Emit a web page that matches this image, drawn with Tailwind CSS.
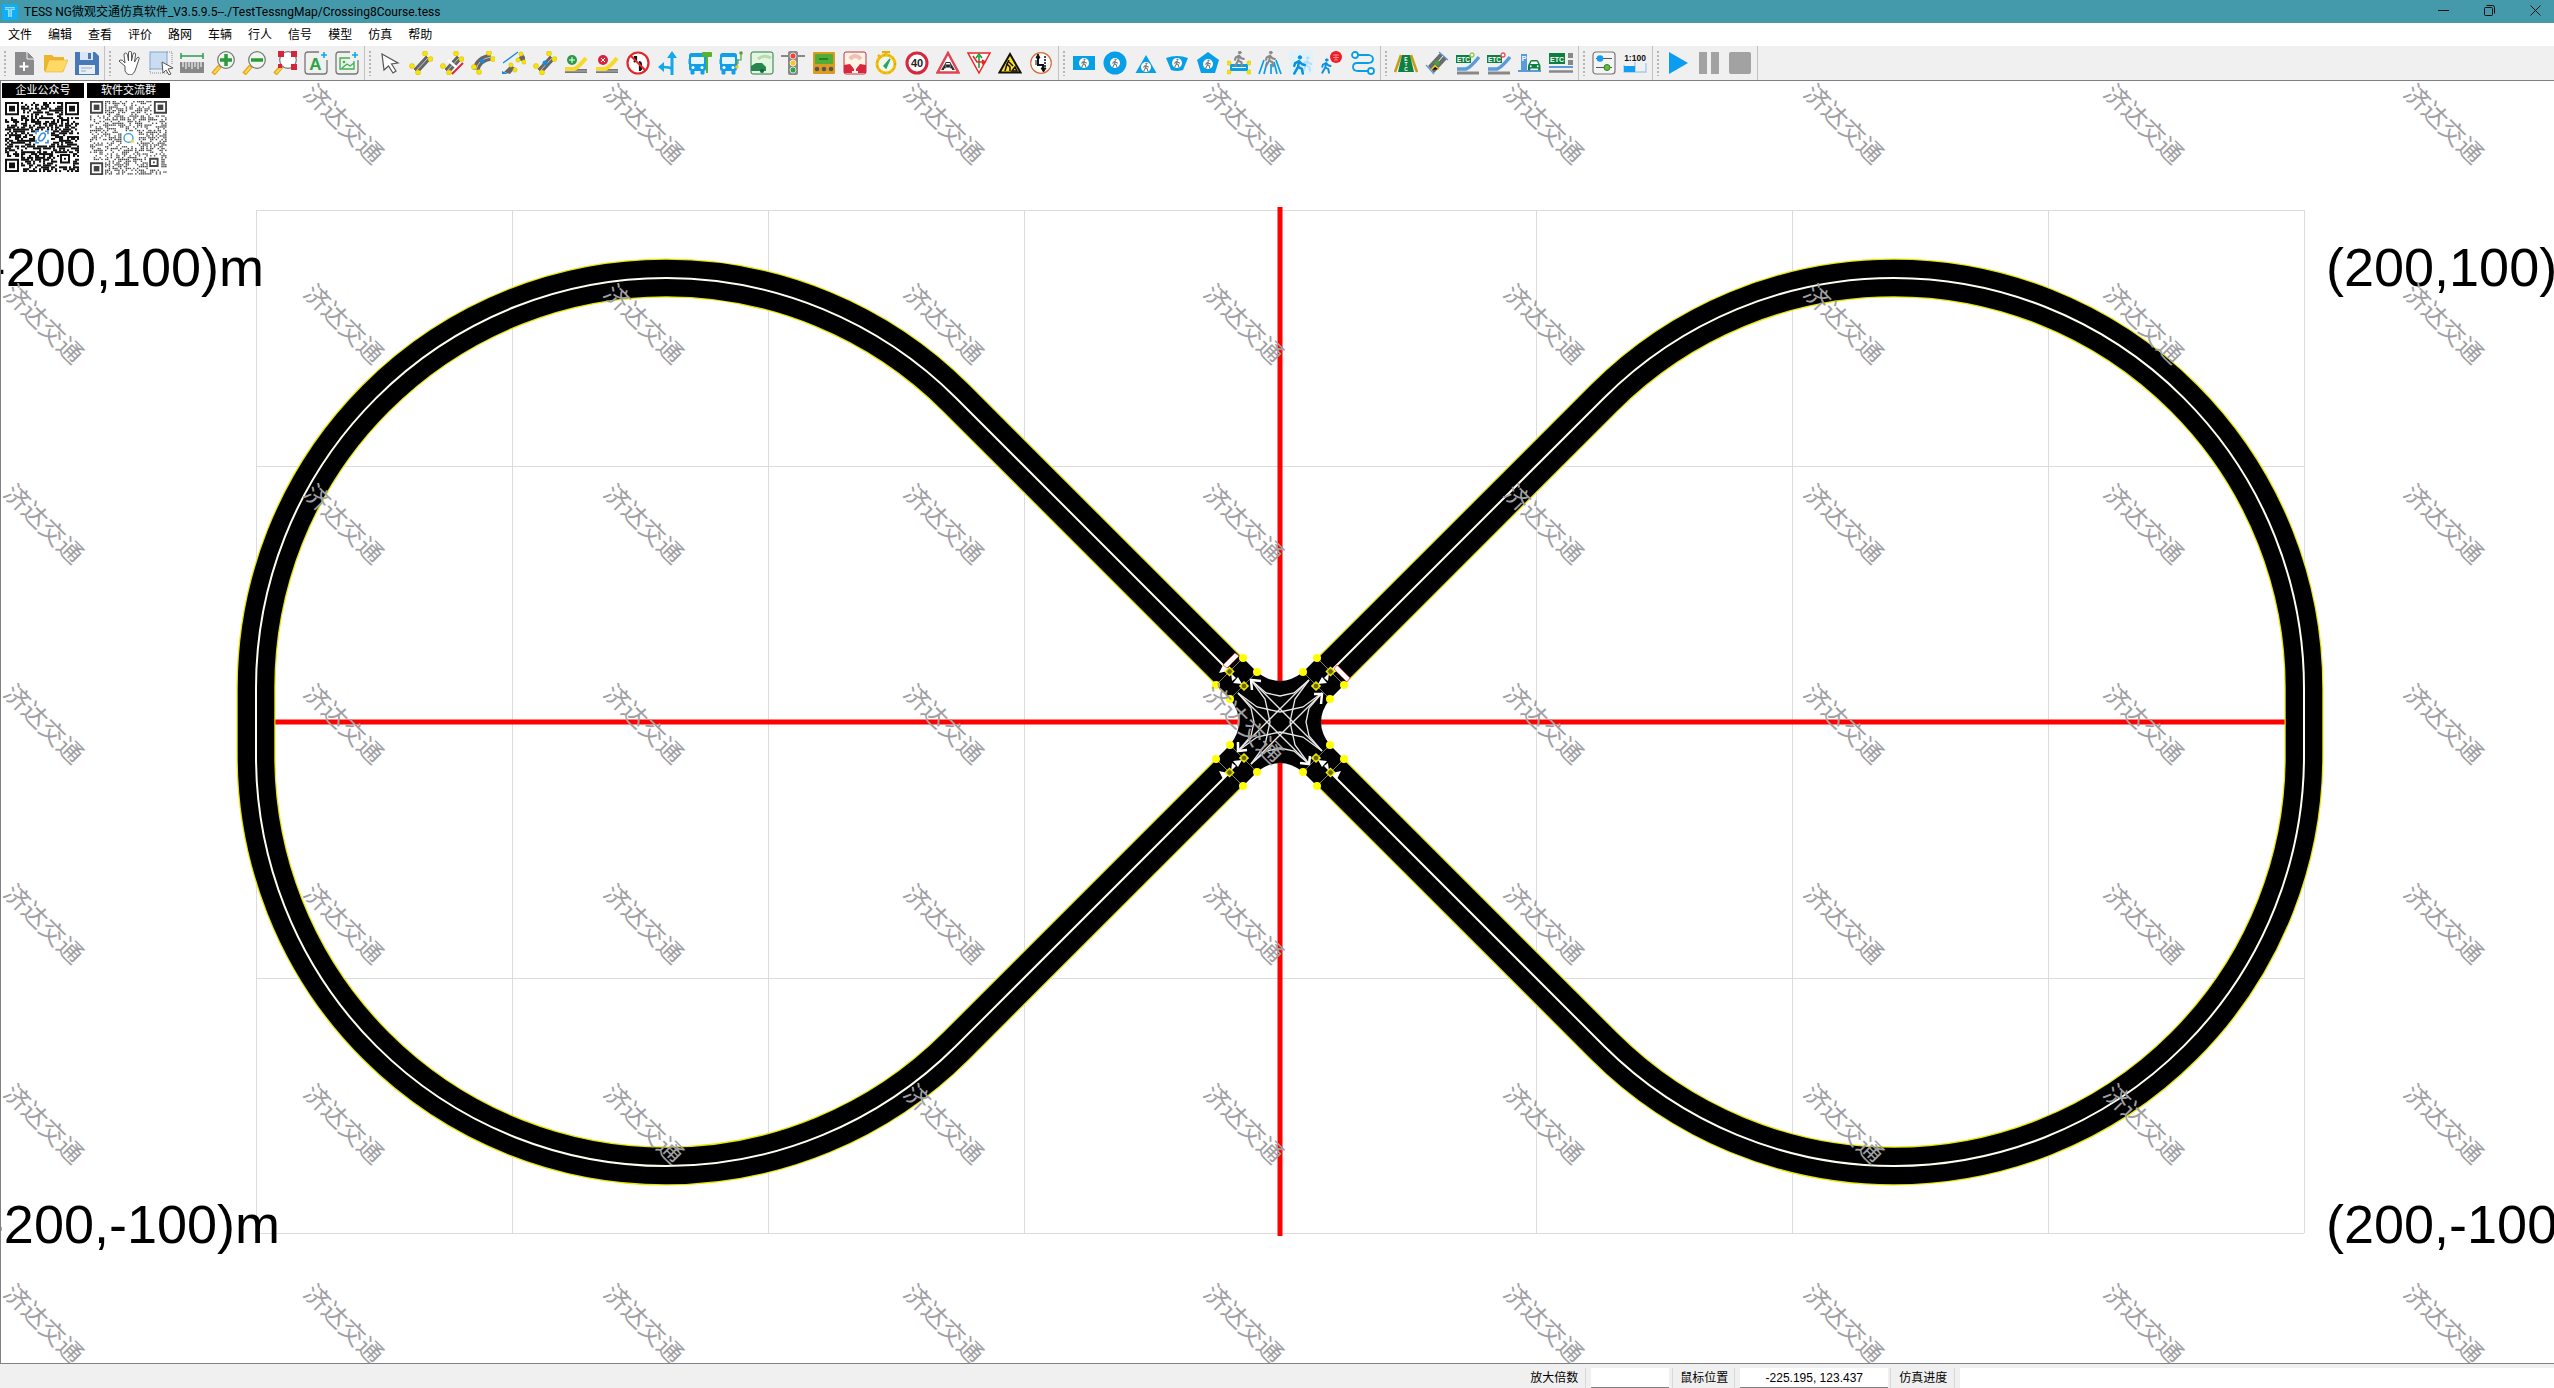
<!DOCTYPE html>
<html lang="zh-CN">
<head>
<meta charset="utf-8">
<title>TESS NG微观交通仿真软件</title>
<script src="https://cdn.jsdelivr.net/npm/@tailwindcss/browser@4"></script>
</head>
<body class="h-screen flex flex-col overflow-hidden bg-white text-black text-[12px] font-['Liberation_Sans','Noto_Sans_CJK_SC',sans-serif]">

<header class="h-[23px] shrink-0 flex items-center bg-[#449aab] pl-[2px]">
  <svg class="w-4 h-4 shrink-0" viewBox="0 0 16 16"><rect width="16" height="16" rx="2" fill="#12aef5"/><path d="M3 3h10v3h-3v7H6V6H3z" fill="#8fdcff"/><path d="M3 4.500h10M8 4v9" stroke="#12aef5" stroke-width=".6"/></svg>
  <h1 class="ml-[6px] text-[12px] leading-4 whitespace-nowrap font-['Roboto','Noto_Sans_CJK_SC',sans-serif]">TESS NG微观交通仿真软件_V3.5.9.5--./TestTessngMap/Crossing8Course.tess</h1>
  <div class="ml-auto -mr-1 flex h-full shrink-0">
    <button aria-label="最小化" class="w-[46px] grid place-items-center"><svg class="w-[11px] h-[11px] -mt-[2px]" viewBox="0 0 11 11" stroke="#111" fill="none"><path d="M0 5.500h11"/></svg></button>
    <button aria-label="还原" class="w-[46px] grid place-items-center"><svg class="w-[11px] h-[11px] -mt-[2px]" viewBox="0 0 11 11" stroke="#111" fill="none"><rect x=".5" y="2.500" width="8" height="8" rx="1"/><path d="M2.500.5h6a2 2 0 0 1 2 2v6"/></svg></button>
    <button aria-label="关闭" class="w-[46px] grid place-items-center"><svg class="w-[11px] h-[11px] -mt-[2px]" viewBox="0 0 11 11" stroke="#111" fill="none"><path d="M.5.5l10 10M10.500.5l-10 10"/></svg></button>
  </div>
</header>

<nav class="h-[23px] shrink-0 flex items-center" aria-label="菜单">
  <button class="px-2">文件</button><button class="px-2">编辑</button><button class="px-2">查看</button><button class="px-2">评价</button><button class="px-2">路网</button><button class="px-2">车辆</button><button class="px-2">行人</button><button class="px-2">信号</button><button class="px-2">模型</button><button class="px-2">仿真</button><button class="px-2">帮助</button>
</nav>

<div id="toolbar" role="toolbar" class="h-[34px] shrink-0 flex bg-[#f0f0f0]"></div>

<main class="relative flex-1 min-h-0 border-t border-b border-l border-[#808085] bg-white overflow-hidden">
  <svg class="block w-full h-full" viewBox="1 81 2553 1282" preserveAspectRatio="xMidYMid slice">
    <defs>
      <path id="loop" d="M1229.500 671.500L956 398A410 410 0 0 0 666 278A410 410 0 0 0 256 688V756A410 410 0 0 0 666 1166A410 410 0 0 0 956 1046L1229.500 772.500"/>
      <g id="side" fill="none" stroke="#e8e8e8" stroke-width="1.300">
        <path d="M-29-42L-14-29L0-26L14-29L29-42"/>
        <path d="M-42-29L-23-15L0-10L23-15L42-29"/>
      </g>
      <g id="leg">
        <path d="M-64-37L-37-64M-50-23L-23-50" stroke="#999" stroke-width=".7"/>
        <path d="M-44-44l-5-5 1 8zM-38-38l-9-1 5-6zM-57-57l-4 8 9-2z" fill="#fff"/>
        <g fill="#ff0"><circle cx="-37" cy="-64" r="4"/><circle cx="-23" cy="-50" r="4"/><circle cx="-64" cy="-37" r="4"/><circle cx="-50" cy="-23" r="4"/></g>
        <g fill="#6b6500" stroke="#ff0" stroke-width="1.200"><rect x="-53.500" y="-53.500" width="6" height="6" transform="rotate(45 -50.500 -50.500)"/><rect x="-39" y="-39" width="6" height="6" transform="rotate(45 -36 -36)"/><circle cx="-50.500" cy="-50.500" r="2.800" stroke-width=".7"/><circle cx="-36" cy="-36" r="2.800" stroke-width=".7"/></g>
      </g>
    </defs>
    <path d="M256.500 210V1233M512.500 210V1233M768.500 210V1233M1024.500 210V1233M1536.500 210V1233M1792.500 210V1233M2048.500 210V1233M2304.500 210V1233M256 210.500H2304M256 466.500H2304M256 978.500H2304M256 1233.500H2304" stroke="#dcdcdc" fill="none"/>
    <path d="M1280 207V1236M256 722H2304" stroke="#f00" stroke-width="5"/>
    <g class="text-[54px] font-['Liberation_Sans',sans-serif]">
      <text x="264" y="286" text-anchor="end">(-200,100)m</text>
      <text x="280" y="1243" text-anchor="end">(-200,-100)m</text>
      <text x="2326" y="286">(200,100)m</text>
      <text x="2326" y="1243">(200,-100)m</text>
    </g>
    <g fill="none">
      <g stroke="#e6e600" stroke-width="39"><use href="#loop"/><use href="#loop" transform="translate(2560) scale(-1 1)"/></g>
      <g stroke="#000" stroke-width="36.500"><use href="#loop"/><use href="#loop" transform="translate(2560) scale(-1 1)"/></g>
      <g stroke="#fffff0" stroke-width="2"><use href="#loop"/><use href="#loop" transform="translate(2560) scale(-1 1)"/></g>
    </g>
    <g transform="translate(1280 722)">
      <path d="M-37-64L-23-50Q0-32 23-50L37-64L64-37L50-23Q32 0 50 23L64 37L37 64L23 50Q0 32-23 50L-37 64L-64 37L-50 23Q-32 0-50-23L-64-37Z"/>
      <use href="#side"/><use href="#side" transform="rotate(90)"/><use href="#side" transform="rotate(180)"/><use href="#side" transform="rotate(270)"/>
      <path d="M-29-42L42 29M-42-29L29 42M29-42L-42 29M42-29L-29 42" stroke="#e8e8e8" stroke-width="1.300"/>
      <path d="M-28-32L-29-42L-19-41M34-28L42-28L41-18M30 34L29 42L20 41M-42 20L-42 29L-33 28" fill="none" stroke="#fff" stroke-width="2.500"/>
      <use href="#leg"/><use href="#leg" transform="scale(-1 1)"/><use href="#leg" transform="scale(1 -1)"/><use href="#leg" transform="scale(-1 -1)"/>
      <path d="M-57-57L-45-69L-41-66L-53-54ZM57-57L70-44L67-40L54-53Z" fill="#fff" stroke="#f33" stroke-width=".7"/>
    </g>
    <g id="marks" fill="#a0a0a4" class="text-[25px] font-['Noto_Sans_CJK_SC',sans-serif]"></g>
  </svg>
  <div class="absolute left-[1px] top-[2px] flex gap-[3px] text-white text-[11px] leading-[15px] text-center">
    <figure class="w-[82px] h-[94px] bg-white"><figcaption class="h-[15px] bg-black">企业公众号</figcaption><svg id="qr1" class="ml-[3px] mt-[4px] w-[74px] h-[70px]" viewBox="0 0 37 37" preserveAspectRatio="none" role="img" aria-label="企业公众号二维码"></svg></figure>
    <figure class="w-[83px] h-[94px] bg-white"><figcaption class="h-[15px] bg-black">软件交流群</figcaption><svg id="qr2" class="ml-[3px] mt-[3px] w-[77px] h-[74px]" viewBox="0 0 41 41" preserveAspectRatio="none" role="img" aria-label="软件交流群二维码"></svg></figure>
  </div>
</main>

<footer class="h-[24px] shrink-0 flex items-stretch bg-[#f0f0f0] pt-[4px] leading-5">
  <div class="grow-[1523] basis-0"></div>
  <label for="zoom" class="w-[64px] pl-2 border-r border-[#d8d8d8]">放大倍数</label>
  <input id="zoom" class="ml-[5px] w-[78px] bg-white border-b border-[#808080] text-center">
  <label for="pos" class="ml-[3px] w-[63px] pl-[7px] border-l border-r border-[#d8d8d8]">鼠标位置</label>
  <input id="pos" value="-225.195, 123.437" class="ml-[5px] w-[148px] bg-white border-b border-[#808080] text-center">
  <label for="prog" class="ml-[2px] w-[65px] pl-2 border-l border-r border-[#d8d8d8]">仿真进度</label>
  <output id="prog" class="ml-[5px] grow-[594] basis-0 bg-white"></output>
</footer>

<script>
const dots = (pts, r = 2.2) => pts.map(p => `<circle cx="${p[0]}" cy="${p[1]}" r="${r}" fill="#f7e307" stroke="#c9b400" stroke-width=".4"/>`).join('');
const road = `<path d="M5 18L17 5L21 9L9 22Z" fill="#666" stroke="#333" stroke-width=".5"/><path d="M7 20L19 7" stroke="#ddd" stroke-width=".8"/>`;
const ends = dots([[3, 15], [16, 2.5], [21.5, 8], [9, 21.5]], 2.6);
const man = (c, x, y, s) => `<g transform="translate(${x} ${y}) scale(${s})" fill="none" stroke="${c}" stroke-width="2.600" stroke-linecap="round" stroke-linejoin="round"><circle cx="1" cy="-8" r="1.800" fill="${c}" stroke-width="1"/><path d="M0-4L-4-2L-5 1M0-4L3-1L6 0M0-4L-1 2L-5 9M-1 2L3 4L4 9" /></g>`;
const lens = `<path d="M9 15L2 23" stroke="#e0a81f" stroke-width="4.500"/><path d="M8.500 16L3 22" stroke="#ffd54c" stroke-width="2"/>`;
const bus = `<rect x="1" y="2" width="17" height="18" rx="2.500" fill="#129ee8"/><rect x="3" y="6" width="13" height="7" rx="1" fill="#e5f6ff"/><circle cx="5" cy="16.500" r="1.500" fill="#fff"/><circle cx="14" cy="16.500" r="1.500" fill="#fff"/><path d="M3 20h3v3H3zM13 20h3v3h-3zM0 8v5M19 8v5" fill="#129ee8" stroke="#129ee8"/>`;
const car = (c, x, y, s) => `<g transform="translate(${x} ${y}) scale(${s})"><path d="M1 5L3 1Q3.500 0 5 0H11Q12.500 0 13 1L15 5Q16 6 16 8V13H13V11H3V13H0V8Q0 6 1 5Z" fill="${c}"/><path d="M3 5L4.500 2H11.500L13 5Z" fill="#fff"/><circle cx="3.500" cy="8" r="1.200" fill="#fff"/><circle cx="12.500" cy="8" r="1.200" fill="#fff"/></g>`;
const ped = (x, y) => `<circle cx="${x}" cy="${y}" r="5" fill="#fff"/>` + man('#777', x, y, .42);
const label = (x, y, s, t, c) => `<text x="${x}" y="${y}" font-size="${s}" font-weight="bold" text-anchor="middle" fill="${c}">${t}</text>`;
const merge = `<path d="M1 20H23" stroke="#777" stroke-width="4"/><path d="M1 18H10Q14 17 22 7" stroke="#f8d928" stroke-width="4" fill="none"/><path d="M1 20H23" stroke="#ddd" stroke-width=".6"/>`;
const etcRamp = c => `<path d="M1 22H23" stroke="#888" stroke-width="3"/><path d="M1 18H10Q14 17 23 6" stroke="#5a9bdc" stroke-width="3.500" fill="none"/><rect x="0" y="4" width="15" height="8" fill="#0c8040"/>${label(7.5, 10.500, 6.500, 'ETC', '#fff')}<circle cx="16" cy="4" r="2" fill="#fff" stroke="${c}" stroke-width="1.300"/>`;

const groups = [
 [['新建','<path d="M2 1H13L21 9V24H2Z" fill="#8a8a8c"/><path d="M14 0L22 8H14Z" fill="#8a8a8c" stroke="#f0f0f0"/><path d="M11 11V20M6.500 15.500H15.500" stroke="#fff" stroke-width="2"/>'],
  ['打开','<path d="M0 4H8L10 6H20V20H0Z" fill="#edb52c"/><path d="M5 9H24L19 21H1Z" fill="#ffd965" stroke="#e0a81f" stroke-width=".5"/>'],
  ['保存','<path d="M0 1H20L24 5V24H0Z" fill="#4679b5"/><path d="M5 1H18V9H5Z" fill="#dce6f2"/><path d="M13 2H16V8H13Z" fill="#4679b5"/><path d="M4 14H20V23H4Z" fill="#e8eef6"/><path d="M6 17H17M6 20H11" stroke="#9ab"/>']],
 [['平移','<path d="M7 15L2 11Q0 10 2 9Q4 8 7 12L6 4Q6 2 7.500 2Q9 2 9.500 4L10.500 10V2Q10.500 0 12 0Q13.500 0 13.500 2V10L15 3Q15.500 1.500 17 2Q18 2.500 17.500 4L16.500 11L19 7Q20 5.500 21 6.500Q21.500 7 21 8L18 17Q16 24 12 24Q9 24 7 20Z" fill="#fff" stroke="#444" stroke-width=".9"/>'],
  ['框选','<rect x="1" y="1" width="17" height="17" fill="#c9dcf0" stroke="#7ea6d2"/><path d="M1 18V22H18M18 1H23V14" fill="none" stroke="#888" stroke-dasharray="1 1"/><path d="M13 11L24 17L19 18L22 23L20 24L17 19L14 22Z" fill="#fff" stroke="#555"/>'],
  ['测距','<path d="M1 2V8M23 2V8M1 5H23" stroke="#2a9a55" stroke-width="1.500"/><rect x="0" y="11" width="24" height="11" fill="#888"/><path d="M3 11V16M6 11V18M9 11V16M12 11V18M15 11V16M18 11V18M21 11V16" stroke="#f0f0f0" stroke-width="1.200"/>'],
  ['放大',lens+'<circle cx="15" cy="9" r="8.300" fill="#eef6ee" stroke="#777" stroke-width="1.200"/><path d="M15 3V15M9 9H21" stroke="#2c9a3b" stroke-width="3.500"/>'],
  ['缩小',lens+'<circle cx="15" cy="9" r="8.300" fill="#eef6ee" stroke="#777" stroke-width="1.200"/><path d="M9 9H21" stroke="#2c9a3b" stroke-width="3.500"/>'],
  ['全图',lens+'<circle cx="15" cy="9" r="8.300" fill="#fff" stroke="#777" stroke-width="1.200"/><path d="M5 0h6v6H5zM18 0h6v6h-6zM18 13h6v6h-6zM5 13h4v4H5z" fill="#d8233c"/>'],
  ['添加文字','<path d="M15 1H4Q1 1 1 4V20Q1 23 4 23H20Q23 23 23 20V9" fill="none" stroke="#777" stroke-width="1.300"/>'+label(11.5,18.500,17,'A','#2ba446')+'<path d="M20 1V7M17 4H23" stroke="#12a7ee" stroke-width="1.600"/>'],
  ['添加图片','<path d="M15 1H4Q1 1 1 4V20Q1 23 4 23H20Q23 23 23 20V9" fill="none" stroke="#777" stroke-width="1.300"/><path d="M15 7H5V18H19V10M7 17L12 13L15 15L19 12" fill="none" stroke="#3db34e" stroke-width="1.400"/><circle cx="9" cy="11" r="1.300" fill="#3db34e"/><path d="M20 1V7M17 4H23" stroke="#12a7ee" stroke-width="1.600"/>']],
 [['选择','<path d="M4 3L20 12L13.500 13L18 20L15 22L10.500 15L6 19Z" fill="#fff" stroke="#555" stroke-width="1.200"/>'],
  ['路段',road+ends],
  ['打断路段',road+'<path d="M8 9L17 17" stroke="#fff" stroke-width="2.500"/>'+ends+'<path d="M12 23L23 12" stroke="#d8283c" stroke-width="2"/>'],
  ['曲线路段','<path d="M5 19Q7 8 20 6" stroke="#666" stroke-width="7" fill="none"/><path d="M5 19Q7 8 20 6" stroke="#ddd" stroke-width=".8" fill="none"/>'+dots([[3,16],[8,21],[18,2],[22,8]],2.6)+'<circle cx="11" cy="10" r="2.200" fill="#1688e0"/>'],
  ['连接段','<path d="M2 21L9 14L13 17L8 23ZM16 8L20 2L23 6V12Z" fill="#666"/><path d="M1 12L16 1" stroke="#1688e0" stroke-width="1.300"/><path d="M0 20L6 23H0Z" fill="#1688e0"/>'+dots([[9,14],[13,19],[16,9],[22,11],[19,3]])],
  ['编辑路段',road+ends+'<circle cx="12" cy="12" r="2.500" fill="#1688e0"/>'],
  ['添加车道',merge+'<circle cx="8" cy="9" r="5" fill="#2b9a45"/><path d="M8 6V12M5 9H11" stroke="#fff"/>'],
  ['删除车道',merge+'<circle cx="8" cy="9" r="5" fill="#d8233c"/><path d="M6 7L10 11M10 7L6 11" stroke="#fff"/>'],
  ['禁行','<circle cx="12" cy="12" r="10.500" fill="#fff" stroke="#e0262b" stroke-width="2.200"/><path d="M14 20V14L15 12M10 5V9L8 11M9 9V5M15 19V14Q15 11 13 11" stroke="#111" stroke-width="2.200" fill="none"/><path d="M4.500 4.500L19.500 19.500" stroke="#e0262b" stroke-width="2"/>'],
  ['路径','<path d="M15 24V6" stroke="#12a7ee" stroke-width="3"/><path d="M10 7L15 0L20 7ZM7 11V21L1 16Z" fill="#12a7ee"/><path d="M15 18Q13 16 6 16" stroke="#12a7ee" stroke-width="2.500" fill="none"/>'],
  ['公交站',bus+'<rect x="14" y="1" width="10" height="5" rx="1" fill="#55b42e"/><path d="M19 5V22" stroke="#55b42e" stroke-width="2"/>'],
  ['公交线路',bus+'<path d="M18 16V9H22V3" stroke="#4da53c" stroke-width="1.200" fill="none"/><circle cx="22" cy="2" r="1.800" fill="#4da53c"/><circle cx="18" cy="16" r="1.800" fill="#f5c71a"/>'],
  ['停车','<rect x="1" y="1" width="22" height="22" rx="2" fill="#e4f6df" stroke="#277a4b"/><path d="M1 19V15L6 12H12L16 16V20H1Z" fill="#27864f"/><path d="M8 8Q14 3 21 7" stroke="#b6dcb0" stroke-width="3" fill="none"/><circle cx="12" cy="20" r="2" fill="#163"/>'],
  ['信号灯','<path d="M0 5H24" stroke="#888" stroke-width="2"/><rect x="7" y="0" width="10" height="24" rx="2" fill="#888"/><circle cx="12" cy="5" r="3" fill="#f2433a" stroke="#fff" stroke-width=".7"/><circle cx="12" cy="12" r="3" fill="#f8c722" stroke="#fff" stroke-width=".7"/><circle cx="12" cy="19" r="3" fill="#2da34b" stroke="#fff" stroke-width=".7"/>'],
  ['检测器','<rect x="1" y="1" width="22" height="22" rx="1" fill="#dc9b20"/><rect x="3" y="3" width="18" height="10" fill="#50ae37"/><path d="M7 8H16" stroke="#276b20" stroke-width="1.500"/><circle cx="5" cy="18" r="2.300" fill="#555"/><circle cx="12" cy="18" r="2.300" fill="#555"/><circle cx="19" cy="18" r="2.300" fill="#555"/>'],
  ['事故','<rect x="1" y="1" width="22" height="22" rx="2" fill="#fff3e5" stroke="#b83840"/><path d="M1 14L7 13L11 18V20H9V22H1ZM23 14L17 13L13 18V20H15V22H23Z" fill="#d7263d"/><path d="M7 8Q12 2 18 8" stroke="#f0bfb8" stroke-width="4" fill="none"/>'],
  ['计时','<path d="M12 0V5M8 1H16M4 4L7 7" stroke="#e7b100" stroke-width="2.500"/><circle cx="12" cy="13" r="9" fill="#eef9f0" stroke="#f4be11" stroke-width="3"/><circle cx="12" cy="13" r="9" fill="none" stroke="#b98a00" stroke-width="1" stroke-dasharray="1 4"/><path d="M10 15L16 8L12 17Z" fill="#2aa565" stroke="#2aa565" stroke-width="1.500"/>'],
  ['限速','<circle cx="12" cy="12" r="10" fill="#fff" stroke="#d7263d" stroke-width="3"/>'+label(12,16,11,'40','#222')],
  ['拥堵','<path d="M12 2L22.500 21.500H1.500Z" fill="#fff" stroke="#e04352" stroke-width="2.500"/>'+car('#222',8,11,.5)+'<path d="M5 19L8 14V19ZM16 14L19 19H16Z" fill="#333"/>'],
  ['让行','<path d="M1 2H23L12 22Z" fill="#fff" stroke="#ee2424" stroke-width="1.500"/><path d="M12 17V5M9 7L12 3L15 7" stroke="#18a03c" stroke-width="1.600" fill="none"/><path d="M6 5L10 11H17M15 9L18 11L15 13" stroke="#ee2424" stroke-width="1.600" fill="none"/>'],
  ['施工','<path d="M12 3L22.500 21.500H1.500Z" fill="#ffdf22" stroke="#111" stroke-width="2"/><path d="M11 9L9 13L12 16V20M9 13L7 20M11 11L15 15M14 20L17 16L19 20Z" stroke="#111" stroke-width="1.500" fill="none"/>'],
  ['变道','<circle cx="12" cy="12" r="10.300" fill="#fff" stroke="#dc6a35" stroke-width="1.200"/><path d="M9 5V14H14V19" stroke="#111" stroke-width="2" fill="none"/><path d="M7 7L9 3L11 7ZM12 17H17L14.500 21ZM7 9V14" fill="#111" stroke="#111"/><path d="M16 5V16" stroke="#111" stroke-width="1.500" stroke-dasharray="2 1"/>']],
 [['矩形面域','<rect x="1" y="5" width="22" height="14" fill="#079fe8"/>'+ped(12,12)],
  ['圆形面域','<circle cx="12" cy="12" r="11.500" fill="#079fe8"/>'+ped(12,12)],
  ['三角面域','<path d="M12 4L22.500 22H1.500Z" fill="#079fe8"/>'+ped(12,16)],
  ['扇形面域','<path d="M1 7Q12 3 23 7L18 19Q12 21 6 19Z" fill="#079fe8"/>'+ped(12,12)],
  ['多边形面域','<path d="M12 1L23 9L19 22H5L1 9Z" fill="#079fe8"/>'+ped(12,13)],
  ['人行道','<path d="M3 13H21V20H3Z" fill="#079fe8"/><path d="M5 16.500H19" stroke="#fff"/>'+dots([[2,12],[22,12],[2,21],[22,21]])+man('#888',12,8,.8)],
  ['人行横道','<path d="M6 9L1 23M9 11L6 23M13 13V23M16 11L19 23M18 9L23 23" stroke="#079fe8" stroke-width="1.700"/>'+man('#888',12,8,.8)],
  ['行人','<rect width="24" height="24" fill="#e2f2fb"/>'+man('#b8def5',18,13,.75)+man('#0791e2',10,14,.95)],
  ['行人限制',man('#0791e2',6,15,.75)+'<circle cx="16" cy="6" r="6" fill="#ee1c25"/><path d="M13 4H19M13 6.500H19M14 9H18M16 3V9" stroke="#ff9a9a" stroke-width=".8"/>'],
  ['行人路径','<path d="M5 4H18Q22 5 22 8Q22 12 17 12H6Q2 12 2 16Q2 20 7 20H19" stroke="#079fe8" stroke-width="1.800" fill="none"/><circle cx="4" cy="4" r="3" fill="#fff" stroke="#079fe8" stroke-width="1.800"/><circle cx="20" cy="20" r="3" fill="#fff" stroke="#079fe8" stroke-width="1.800"/>']],
 [['ETC车道','<path d="M7 4L1 21M17 4L23 21" stroke="#c79c18" stroke-width="2.500"/><path d="M8 4H16L20 21H4Z" fill="#0c8040"/>'+label(12,10,5,'E','#fff')+label(12,15,5,'T','#fff')+label(12,20,5,'C','#fff')],
  ['ETC路段','<path d="M3 15L15 2L22 8L9 22Z" fill="#6b6b6b"/><path d="M7 18L18 5" stroke="#fff" stroke-width="1"/><path d="M6 19L10 15L14 18" stroke="#eec719" stroke-width="1.500"/><circle cx="12" cy="12" r="2.500" fill="#42a23c"/><path d="M1 14L9 23M14 1L23 9" stroke="#5a9bdc" stroke-width="1.200"/>'],
  ['添加ETC',etcRamp('#8fca55')],
  ['删除ETC',etcRamp('#e84a5f')],
  ['停车场','<path d="M3 3H9V20H3Z" fill="#5a9bdc"/><path d="M0 20H23" stroke="#5a9bdc" stroke-width="2"/>'+label(6,10,7,'P','#fff')+car('#0c8040',10,9,.78)],
  ['收费站','<path d="M0 16H24" stroke="#5a9bdc" stroke-width="2"/><path d="M0 20.500H24" stroke="#888" stroke-width="2.500"/><rect x="0" y="2" width="16" height="11" fill="#0c8040"/>'+label(8,10.500,7,'ETC','#fff')+'<path d="M19 2h5v5h-5zM19 9h5v5h-5z" fill="#888"/>']],
 [['参数','<rect x="1" y="1" width="22" height="22" rx="3" fill="#f4f4f4" stroke="#777" stroke-width="1.200"/><path d="M4 7.500H20M4 16.500H20" stroke="#555" stroke-width="1.200"/><circle cx="8" cy="7.500" r="3.300" fill="#139df0"/><circle cx="15" cy="16.500" r="3" fill="#65bd3e" stroke="#2d7e2c"/>'],
  ['比例尺',label(12,9.500,8.500,'1:100','#111')+'<path d="M1 14V21H23V12M12 11V21" fill="none" stroke="#a0cbed" stroke-width="1.400"/><path d="M1 15H12V21H1Z" fill="#159df0"/>']],
 [['开始','<path d="M3 1L22 12L3 23Z" fill="#0b9df2"/>'],
  ['暂停','<path d="M2 1H10V23H2ZM14 1H22V23H14Z" fill="#a2a2a2"/>'],
  ['停止','<rect x="1" y="1" width="22" height="22" rx="2" fill="#a2a2a2"/>']]
];
document.getElementById('toolbar').innerHTML = groups.map(g => `<div class="flex items-center h-full border-r border-[#c3c3c3] pr-[2px]"><svg class="w-[9px] h-[26px]" viewBox="0 0 9 26"><path d="M5 1V26" stroke="#b5b5b5" stroke-width="2" stroke-dasharray="2 2"/></svg>${g.map(i => `<button class="w-[31px] h-[30px] grid place-items-center" aria-label="${i[0]}"><svg class="w-6 h-6" viewBox="0 0 24 24" font-family="Liberation Sans, sans-serif">${i[1]}</svg></button>`).join('')}</div>`).join('');

let marks = '';
for (let r = 0; r < 7; r++) for (let c = 0; c < 9; c++)
  if (r || c) marks += `<text transform="translate(${2 + c * 300} ${95 + r * 200}) rotate(45)">济达交通</text>`;
document.getElementById('marks').innerHTML = marks;

function qr(id, n, color, seed, size, density, logo) {
  let out = '', s = seed;
  const rnd = () => (s = (s * 16807) % 2147483647) / 2147483647;
  const finder = (x, y) => out += `<path d="M${x + .5} ${y + .5}h6v6h-6z" fill="none" stroke="${color}"/><rect x="${x + 2}" y="${y + 2}" width="3" height="3" fill="${color}"/>`;
  for (let y = 0; y < n; y++) for (let x = 0; x < n; x++) {
    const v = rnd(), m = n / 2;
    if ((x < 8 && y < 8) || (x > n - 9 && y < 8) || (x < 8 && y > n - 9)) continue;
    if (Math.abs(x - m) < 4.500 && Math.abs(y - m) < 4.500) continue;
    if (x > n - 11 && x < n - 3 && y > n - 11 && y < n - 3) continue;
    if (v < density) out += `<rect x="${x}" y="${y}" width="${size}" height="${size}" fill="${color}"/>`;
  }
  finder(0, 0); finder(n - 7, 0); finder(0, n - 7);
  out += `<path d="M${n - 9} ${n - 9}h4v4h-4z" fill="none" stroke="${color}"/><rect x="${n - 7.500}" y="${n - 7.500}" width="1" height="1" fill="${color}"/>`;
  document.getElementById(id).innerHTML = out + logo;
}
qr('qr1', 37, '#111', 77, 1.05, .52, '<g fill="none" stroke="#3c8fd8" stroke-width=".8"><path d="M15.500 17V15.500H17M20 15.500H21.500V17M21.500 20V21.500H20M17 21.500H15.500V20"/><ellipse cx="18.500" cy="18.500" rx="1.300" ry="2.300" transform="rotate(30 18.500 18.500)"/></g>');
qr('qr2', 41, '#444', 991, .75, .5, '<circle cx="20.500" cy="20.500" r="2.400" fill="none" stroke="#2f9be0" stroke-width=".7"/><circle cx="22.500" cy="22.300" r=".9" fill="#f2d34a"/>');
</script>
</body>
</html>
